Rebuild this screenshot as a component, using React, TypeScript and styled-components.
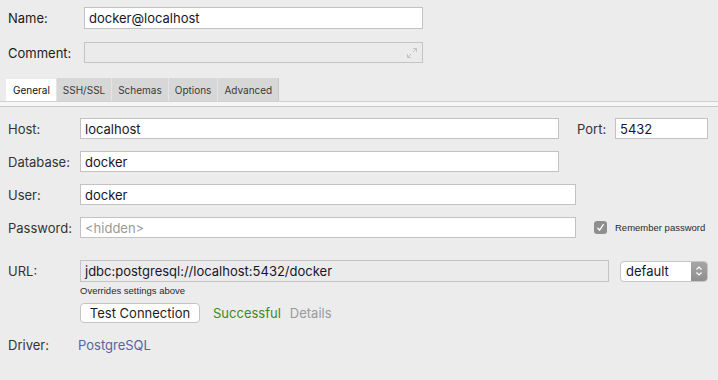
import React from 'react';
import styled, { createGlobalStyle } from 'styled-components';

const GlobalStyle = createGlobalStyle`
    html, body {
        margin: 0;
        padding: 0;
        background: #ececec;
    }
    * {
        box-sizing: border-box;
    }
`;

const Page = styled.div`
    width: 718px;
    height: 380px;
    overflow: hidden;
    background: #ececec;
    font-family: Inter, "Liberation Sans", Arial, sans-serif;
    font-size: 13px;
    color: #1c1c1c;
`;

const Header = styled.div`
    display: flex;
    flex-direction: column;
    gap: 13px;
    padding: 7px 0 0 8px;
`;

const Row = styled.div<{ $gap?: number }>`
    display: flex;
    align-items: center;
    gap: ${(p) => p.$gap ?? 0}px;
`;

const Label = styled.div<{ $w: number; $muted?: boolean }>`
    width: ${(p) => p.$w}px;
    flex: none;
    color: ${(p) => (p.$muted ? '#333' : '#1c1c1c')};
    white-space: nowrap;
`;

const Field = styled.div<{ $w: number; $h?: number; $disabled?: boolean; $placeholder?: boolean }>`
    position: relative;
    width: ${(p) => p.$w}px;
    height: ${(p) => p.$h ?? 21}px;
    flex: none;
    display: flex;
    align-items: center;
    padding: 0 4px;
    background: ${(p) => (p.$disabled ? '#ebebeb' : '#fff')};
    border: 1px solid ${(p) => (p.$disabled ? '#c4c4c4' : '#c2c2c2')};
    color: ${(p) => (p.$placeholder ? '#9a9a9a' : '#16162a')};
    white-space: nowrap;
`;

const ResizeGrip = styled.svg`
    position: absolute;
    right: 4px;
    bottom: 3px;
`;

const TabStrip = styled.div`
    margin-top: 15px;
    padding-left: 6px;
    display: flex;
    align-items: flex-end;
    height: 23px;
`;

const Tab = styled.div<{ $active?: boolean }>`
    height: ${(p) => (p.$active ? 22 : 23)}px;
    display: flex;
    align-items: center;
    padding: 0 6px;
    font-size: 10px;
    color: ${(p) => (p.$active ? '#111' : '#3a3a3a')};
    background: ${(p) => (p.$active ? '#fff' : '#d7d7d7')};
    border-left: 1px solid ${(p) => (p.$active ? '#fff' : '#e4e4e4')};
    &:last-child {
        border-right: 1px solid #c9c9c9;
    }
`;

const TabRule = styled.div`
    height: 6px;
    background: #f6f6f6;
    border-top: 1px solid #d0d0d0;
    border-bottom: 1px solid #c9c9c9;
`;

const Body = styled.div`
    padding: 11px 0 0 8px;
    display: flex;
    flex-direction: column;
`;

const FormRows = styled.div`
    display: flex;
    flex-direction: column;
    gap: 12px;
`;

const Check = styled.div`
    width: 13px;
    height: 13px;
    border-radius: 3px;
    background: #8e8e8e;
    display: flex;
    align-items: center;
    justify-content: center;
`;

const SmallText = styled.span<{ $color?: string }>`
    font-family: "Liberation Sans", Arial, sans-serif;
    font-size: 9.5px;
    color: ${(p) => p.$color ?? '#2a2a2a'};
`;

const Select = styled.div`
    width: 88px;
    height: 21px;
    flex: none;
    display: flex;
    background: #fff;
    border: 1px solid #c6c6c6;
    border-radius: 4px;
    overflow: hidden;
    color: #16162a;
`;

const SelectValue = styled.div`
    flex: 1;
    display: flex;
    align-items: center;
    padding-left: 5px;
`;

const Stepper = styled.div`
    width: 16px;
    display: flex;
    align-items: center;
    justify-content: center;
    background: linear-gradient(#a6a6a6, #8f8f8f);
`;

const Hint = styled.div`
    margin: 3px 0 0 72px;
    font-family: "Liberation Sans", Arial, sans-serif;
    font-size: 9.5px;
    color: #2a2a2a;
    line-height: 12px;
`;

const Button = styled.button`
    width: 120px;
    height: 20px;
    padding: 0;
    background: #fff;
    border: 1px solid #c4c4c4;
    border-radius: 4px;
    font-family: inherit;
    font-size: 13px;
    color: #1c1c1c;
`;

const Status = styled.span<{ $color: string }>`
    color: ${(p) => p.$color};
`;

const Link = styled.span`
    color: #5863a0;
`;

export default function App() {
    return (
        <Page>
            <GlobalStyle />
            <Header>
                <Row>
                    <Label $w={76}>Name:</Label>
                    <Field $w={339} $h={22}>docker@localhost</Field>
                </Row>
                <Row>
                    <Label $w={76}>Comment:</Label>
                    <Field $w={339} $disabled>
                        <ResizeGrip width="12" height="12" viewBox="0 0 12 12" fill="none" stroke="#c4c4c4" strokeWidth="1">
                            <path d="M7 1.5h3.5V5M10.5 1.5L7 5M1.5 7v3.5H5M1.5 10.5L5 7" />
                        </ResizeGrip>
                    </Field>
                </Row>
            </Header>
            <TabStrip>
                <Tab $active>General</Tab>
                <Tab>SSH/SSL</Tab>
                <Tab>Schemas</Tab>
                <Tab>Options</Tab>
                <Tab>Advanced</Tab>
            </TabStrip>
            <TabRule />
            <Body>
                <FormRows>
                    <Row>
                        <Label $w={72} $muted>Host:</Label>
                        <Field $w={479}>localhost</Field>
                        <Label $w={38} $muted style={{ marginLeft: 18 }}>Port:</Label>
                        <Field $w={93}>5432</Field>
                    </Row>
                    <Row>
                        <Label $w={72} $muted>Database:</Label>
                        <Field $w={479}>docker</Field>
                    </Row>
                    <Row>
                        <Label $w={72} $muted>User:</Label>
                        <Field $w={496}>docker</Field>
                    </Row>
                    <Row>
                        <Label $w={72} $muted>Password:</Label>
                        <Field $w={496} $placeholder>&lt;hidden&gt;</Field>
                        <Row $gap={8} style={{ marginLeft: 18 }}>
                            <Check>
                                <svg width="9" height="9" viewBox="0 0 9 9" fill="none" stroke="#fff" strokeWidth="1.3">
                                    <path d="M1.5 4.8L3.6 7.2L7.6 1.2" />
                                </svg>
                            </Check>
                            <SmallText>Remember password</SmallText>
                        </Row>
                    </Row>
                </FormRows>
                <Row style={{ marginTop: 22 }}>
                    <Label $w={72} $muted>URL:</Label>
                    <Field $w={529} $h={22} $disabled>jdbc:postgresql://localhost:5432/docker</Field>
                    <Select style={{ marginLeft: 11 }}>
                        <SelectValue>default</SelectValue>
                        <Stepper>
                            <svg width="8" height="12" viewBox="0 0 8 12" fill="none" stroke="#fff" strokeWidth="1.2">
                                <path d="M1.5 4.5L4 2L6.5 4.5M1.5 7.5L4 10L6.5 7.5" />
                            </svg>
                        </Stepper>
                    </Select>
                </Row>
                <Hint>Overrides settings above</Hint>
                <Row $gap={13} style={{ marginTop: 6, marginLeft: 72 }}>
                    <Button>Test Connection</Button>
                    <Row $gap={9}>
                        <Status $color="#3d8a1f">Successful</Status>
                        <Status $color="#9a9a9a">Details</Status>
                    </Row>
                </Row>
                <Row style={{ marginTop: 14 }}>
                    <Label $w={70} $muted>Driver:</Label>
                    <Link>PostgreSQL</Link>
                </Row>
            </Body>
        </Page>
    );
}
